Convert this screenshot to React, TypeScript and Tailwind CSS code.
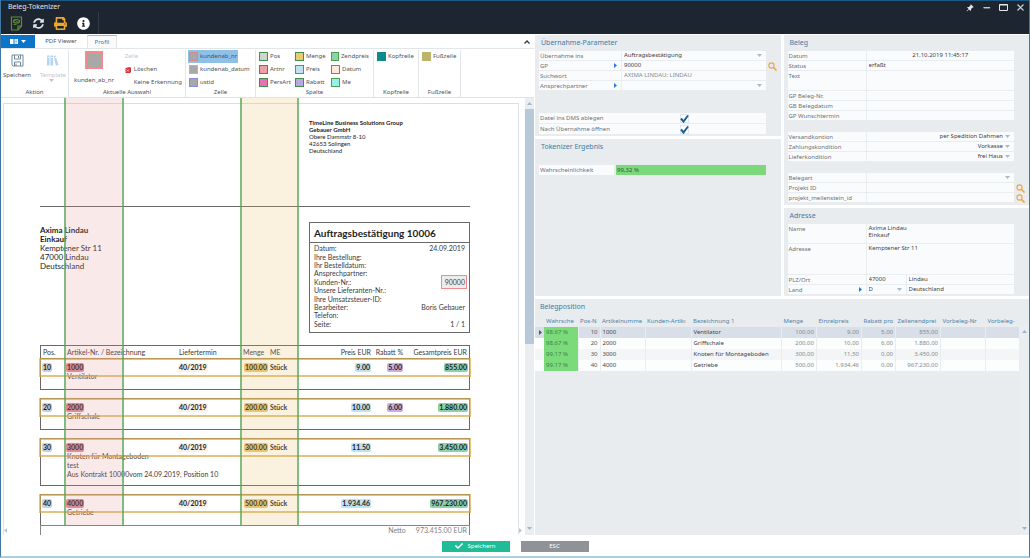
import { ReactNode, useId, useState } from "react"
import { BsPinAngleFill } from "react-icons/bs"
import { FaCheck, FaInfoCircle, FaPrint, FaSyncAlt } from "react-icons/fa"
import { VscChromeClose, VscChromeMaximize, VscChromeMinimize } from "react-icons/vsc"

type IconProps = { className?: string }

const Caret = ({ className = "" }: IconProps) => (
    <svg className={`h-[3px] w-[5px] fill-current ${className}`} viewBox="0 0 10 6"><path d="M0 0h10L5 6z" /></svg>
)

const PlayMark = ({ className = "" }: IconProps) => (
    <svg className={`h-[5px] w-[3px] shrink-0 fill-current ${className}`} viewBox="0 0 6 10"><path d="M0 0l6 5-6 5z" /></svg>
)

const SearchIcon = () => (
    <svg className="h-[9px] w-[9px] fill-none stroke-[#f0a445]" viewBox="0 0 18 18" strokeLinecap="round">
        <circle cx="7" cy="7" r="5.200" strokeWidth="2.200" />
        <path d="M11.500 11.500l4.500 4.500" strokeWidth="3.400" />
    </svg>
)

const NoteIcon = () => (
    <svg className="h-[15px] w-[13px] fill-none stroke-[#5f8f2c]" viewBox="0 0 26 30" strokeWidth="2.4">
        <path d="M3 2h20v18l-7 8H3z" />
        <path d="M23 20h-7v8" />
        <ellipse cx="13" cy="10.500" rx="6" ry="3.500" />
        <path d="M8 7l10 7M7 17h6" strokeWidth="1.800" />
    </svg>
)

const SaveIcon = () => (
    <svg className="h-[13px] w-[13px] fill-none stroke-[#6f8a9c]" viewBox="0 0 26 26" strokeWidth="2">
        <path d="M2 2h22v22H4l-2-2z" />
        <path d="M7 2v8h12V2M7 24v-8h12v8" />
        <path d="M15 4v4M10 19v5" />
    </svg>
)

const BooksIcon = () => (
    <svg className="h-[13px] w-[13px] fill-[#b5d3f5]" viewBox="0 0 26 26">
        <path d="M2 3h5v20H2zM9 3h5v20H9zM15 4l4-1 6 19-5 1z" />
        <path d="M3 6h3v2H3zM10 6h3v2h-3zM16.500 7l3-1 .5 2-3 1z" className="fill-white" />
    </svg>
)

const DeleteIcon = () => (
    <svg className="h-[6px] w-[6px]" viewBox="0 0 12 12">
        <path d="M1 2l9-2 2 2v8l-2 2H1z" className="fill-[#d9303c]" />
        <path d="M3.500 5l4 4m0-4l-4 4" className="stroke-white" strokeWidth="1.400" />
    </svg>
)

const Header = () => (
    <header className="flex h-[34px] shrink-0 justify-between border-t border-[#1d5784] bg-[#1d2530] text-[#e4e7ea]">
        <div>
            <h1 className="h-[11px] pl-[7px] text-[7px] leading-[12px]">Beleg-Tokenizer</h1>
            <div className="flex h-[22px] items-center gap-[10px] border-r border-[#313a45] pr-2 pl-[9px]">
                <button aria-label="Beleg"><NoteIcon /></button>
                <button aria-label="Aktualisieren"><FaSyncAlt className="size-[11px]" /></button>
                <button aria-label="Drucken"><FaPrint className="size-[13px] text-[#eea52b]" /></button>
                <button aria-label="Info"><FaInfoCircle className="size-[13px] text-white" /></button>
            </div>
        </div>
        <div className="flex h-[13px] items-center gap-[8px] pr-1">
            <button aria-label="Anheften"><BsPinAngleFill className="size-[8px]" /></button>
            <button aria-label="Minimieren"><VscChromeMinimize className="size-[9px] stroke-1" /></button>
            <button aria-label="Maximieren">
                <svg className="h-[7px] w-[9px] fill-none stroke-current" viewBox="0 0 9 7"><path d="M.5 1h8M.5 .5h8v6h-8z" /></svg>
            </button>
            <button aria-label="Schließen"><VscChromeClose className="size-[9px] stroke-1" /></button>
        </div>
    </header>
)

/* ---------- Ribbon ---------- */

const cells = [
    { name: "kundenab_nr", color: "border-[#d9848c] bg-[#a8a8a8]" },
    { name: "kundenab_datum", color: "border-[#8fce9a] bg-[#a8a8a8]" },
    { name: "ustid", color: "border-[#8a8ae0] bg-[#a8a8a8]" },
]

const columns = [
    { name: "Pos", color: "border-[#3f8f46] bg-[#d0d4d0]" },
    { name: "Artnr", color: "border-[#3f8f46] bg-[#e9a3a3]" },
    { name: "PersArt", color: "border-[#3f8f46] bg-[#e573b4]" },
    { name: "Menge", color: "border-[#3f8f46] bg-[#ecc878]" },
    { name: "Preis", color: "border-[#45a34c] bg-[#bfe3ee]" },
    { name: "Rabatt", color: "border-[#3f8f46] bg-[#b9a6e4]" },
    { name: "Zendpreis", color: "border-[#45a34c] bg-[#8fd0ad]" },
    { name: "Datum", color: "border-[#45a34c] bg-[#fbeadb]" },
    { name: "Me", color: "border-[#45a34c] bg-[#97f0ec]" },
]

type TokenProps = { name: string, color: string, active?: boolean, onClick?: () => void }

const Token = ({ name, color, active, onClick }: TokenProps) => (
    <button onClick={onClick} className={`flex h-[13px] items-center gap-[2px] px-px whitespace-nowrap ${active ? "bg-[#8fc0e8]" : ""}`}>
        <span className={`size-[9px] border ${color}`} />
        {name}
    </button>
)

const RibbonGroup = ({ title, className, children }: { title: string, className: string, children: ReactNode }) => (
    <section className={`flex shrink-0 flex-col border-r border-[#e3e6e9] ${className}`}>
        <div className="h-[38px]">{children}</div>
        <h2 className="text-center leading-[8px]">{title}</h2>
    </section>
)

const Ribbon = () => {
    const [selected, setSelected] = useState<string>("kundenab_nr")

    return (
        <div className="shrink-0 bg-white text-[6px] text-[#4c5258]">
            <nav className="flex h-[14px] items-stretch border-b border-[#e3e6e9]">
                <button aria-label="Menü" className="flex w-[34px] items-center justify-center gap-[3px] bg-[#0d74c8] text-white">
                    <svg className="h-[5px] w-[8px] fill-white" viewBox="0 0 16 10"><path d="M0 0h7v10H0zM9 0h7v10H9z" /><path d="M10.500 2h4M10.500 5h4M10.500 8h4" stroke="#0d74c8" /></svg>
                    <Caret className="h-[2px] w-[4px]" />
                </button>
                <button className="w-[52px]">PDF Viewer</button>
                <button className="w-[30px] border-x border-t border-x-[#e3e6e9] border-t-[#c9a3d4] bg-[#fbfbfc] text-[#1c7cb8]">Profil</button>
                <button aria-label="Menüband einklappen" className="ml-auto pr-1">
                    <svg className="h-[4px] w-[6px] fill-none stroke-[#30363c]" viewBox="0 0 12 8" strokeWidth="2.500"><path d="M1 7l5-5 5 5" /></svg>
                </button>
            </nav>
            <div className="flex h-[49px] border-b border-[#dfe2e6] pt-px">
                <RibbonGroup title="Aktion" className="w-[68px]">
                    <div className="flex justify-between px-[2px] pt-1">
                        <button className="flex flex-col items-center gap-1 leading-[8px]"><SaveIcon />Speichern</button>
                        <button className="flex flex-col items-center gap-1 leading-[8px] text-[#bfc4c9]"><BooksIcon />Template</button>
                    </div>
                    <Caret className="ml-[48px] h-[2px] w-[3px] text-[#bfc4c9]" />
                </RibbonGroup>
                <RibbonGroup title="Aktuelle Auswahl" className="w-[117px]">
                    <div className="flex justify-between pr-[3px] pl-1">
                        <div className="flex w-[42px] flex-col items-center gap-[7px] pt-px leading-[8px]">
                            <span className="size-[18px] border-2 border-[#f58a8a] bg-[#a8a8a8]" />
                            kunden_ab_nr
                        </div>
                        <div className="flex flex-col leading-[13px]">
                            <span className="text-[#bfc4c9]">Zelle</span>
                            <button className="flex items-center gap-[3px]"><DeleteIcon />Löschen</button>
                            <button className="pl-[9px]">Keine Erkennung</button>
                        </div>
                    </div>
                </RibbonGroup>
                <RibbonGroup title="Zelle" className="w-[70px]">
                    <div className="flex flex-col items-start pl-[2px]">
                        {cells.map((cell) => (
                            <Token key={cell.name} {...cell} active={cell.name === selected} onClick={() => setSelected(cell.name)} />
                        ))}
                    </div>
                </RibbonGroup>
                <RibbonGroup title="Spalte" className="w-[118px]">
                    <div className="grid grid-flow-col grid-cols-[36px_36px_40px] grid-rows-3 pl-[2px]">
                        {columns.map((column) => <Token key={column.name} {...column} />)}
                    </div>
                </RibbonGroup>
                <RibbonGroup title="Kopfzeile" className="w-[45px]">
                    <div className="pl-[2px]"><Token name="Kopfzeile" color="border-[#0e8a8c] bg-[#0e8a8c]" /></div>
                </RibbonGroup>
                <RibbonGroup title="Fußzeile" className="w-[42px]">
                    <div className="pl-[2px]"><Token name="Fußzeile" color="border-[#bdb36a] bg-[#bdb36a]" /></div>
                </RibbonGroup>
            </div>
        </div>
    )
}

/* ---------- Document ---------- */

const orderInfo = [
    ["Datum:", "24.09.2019"],
    ["Ihre Bestellung:", ""],
    ["Ihr Bestelldatum:", ""],
    ["Ansprechpartner:", ""],
    ["Kunden-Nr.:", "90000"],
    ["Unsere Lieferanten-Nr.:", ""],
    ["Ihre Umsatzsteuer-ID:", ""],
    ["Bearbeiter:", "Boris Gebauer"],
    ["Telefon:", ""],
    ["Seite:", "1 / 1"],
]

const orderLines = [
    { pos: "10", nr: "1000", text: ["Ventilator"], menge: "100.00", preis: "9.00", rabatt: "5.00", gesamt: "855.00" },
    { pos: "20", nr: "2000", text: ["Griffschale"], menge: "200.00", preis: "10.00", rabatt: "6.00", gesamt: "1.880.00" },
    { pos: "30", nr: "3000", text: ["Knoten für Montageboden", "test", "Aus Kontrakt 10000vom 24.09.2019, Position 10"], menge: "300.00", preis: "11.50", rabatt: "", gesamt: "3.450.00" },
    { pos: "40", nr: "4000", text: ["Getriebe"], menge: "500.00", preis: "1.934.46", rabatt: "", gesamt: "967.230.00" },
]

const lineGrid = "grid grid-cols-[24px_112px_62px_29px_1fr_60px_32px_66px]"

const Mark = ({ color, children }: { color: string, children: ReactNode }) => (
    <span className={`inline-block rounded-xs px-px ${color}`}>{children}</span>
)

const OrderTable = () => (
    <table className="mt-[12px] block text-[7px] leading-[9px] whitespace-nowrap text-[#3a3a3c]">
        <thead className="block border-x border-t border-[#6b6865]">
            <tr className={`${lineGrid} h-[12px] items-center text-left [&>th]:font-normal`}>
                <th className="pl-[2px]">Pos.</th>
                <th className="pl-[2px]">Artikel-Nr. / Bezeichnung</th>
                <th className="pl-[2px]">Liefertermin</th>
                <th className="pl-1">Menge</th>
                <th className="pl-[2px]">ME</th>
                <th className="text-right">Preis EUR</th>
                <th className="text-right">Rabatt %</th>
                <th className="pr-[2px] text-right">Gesamtpreis EUR</th>
            </tr>
        </thead>
        {orderLines.map((line) => (
            <tbody key={line.pos} className="relative mb-2 block border border-[#6b6865] last-of-type:mb-0">
                <tr className={`${lineGrid} pt-1 font-bold text-[#1d1d1f]`}>
                    <td className="pl-px"><Mark color="bg-[#cdd0d2]">{line.pos}</Mark></td>
                    <td className="pl-px"><Mark color="bg-[#e08a90]">{line.nr}</Mark></td>
                    <td className="pl-px"><Mark color="bg-[#fbf1e4]">40/2019</Mark></td>
                    <td className="text-right"><Mark color="bg-[#ebc875]">{line.menge}</Mark></td>
                    <td className="pl-[2px]">Stück</td>
                    <td className="text-right"><Mark color="bg-[#bfe3f3]">{line.preis}</Mark></td>
                    <td className="text-right">{line.rabatt && <Mark color="bg-[#c4aee6]">{line.rabatt}</Mark>}</td>
                    <td className="pr-px text-right"><Mark color="bg-[#8fd0a8]">{line.gesamt}</Mark></td>
                </tr>
                <tr className="block">
                    <td colSpan={8} className="block min-h-[17px] pb-[6px] pl-[26px]">
                        {line.text.map((text) => <p key={text}>{text}</p>)}
                    </td>
                </tr>
                <tr className="pointer-events-none absolute -inset-x-[2px] -top-px block h-[19px] border-2 border-[#d9a94a]/70" aria-hidden="true" />
            </tbody>
        ))}
        <tfoot className="block border-x border-[#6b6865]">
            <tr className="flex h-[16px] justify-end gap-[10px] pr-[2px] text-[#5a5f64]">
                <td>Netto</td>
                <td>973.415.00 EUR</td>
            </tr>
        </tfoot>
    </table>
)

const ScrollBar = ({ thumb }: { thumb?: string }) => (
    <div className="flex w-[9px] shrink-0 flex-col items-center bg-[#eaeef1] text-[#9fb6c8]">
        <div className="flex h-[11px] items-center"><Caret className="rotate-180" /></div>
        {thumb && <div className={`w-full bg-[#b7c8d8] ${thumb}`} />}
        <div className="mt-auto flex h-[14px] items-center"><Caret /></div>
    </div>
)

const PdfPage = () => (
    <div className="flex min-h-0 flex-1 bg-white">
        <div className="relative flex min-w-0 flex-1 flex-col overflow-hidden pt-[5px] pr-[6px] pl-[2px]">
            <article className="min-h-0 flex-1 overflow-hidden border-x border-t border-[#dcdfe2] pr-[48px] pl-[36px] font-[Lato,sans-serif] text-[#1d1d1f]">
                <address className="ml-auto h-[88px] w-[161px] pt-[15px] text-[6px] leading-[7px] not-italic">
                    <p className="font-bold">TimeLine Business Solutions Group</p>
                    <p className="font-bold">Gebauer GmbH</p>
                    <p>Obere Dammstr 8-10</p>
                    <p>42653 Solingen</p>
                    <p>Deutschland</p>
                </address>
                <div className="mt-[14px] flex justify-between border-t border-[#6b6865] pt-[15px]">
                    <address className="pt-1 text-[8px] leading-[9px] not-italic">
                        <p className="font-bold">Axima Lindau</p>
                        <p className="font-bold">Einkauf</p>
                        <p>Kemptener Str 11</p>
                        <p>47000 Lindau</p>
                        <p>Deutschland</p>
                    </address>
                    <section className="w-[161px] border border-[#6b6865]">
                        <h2 className="h-[20px] border-b border-[#6b6865] pl-1 text-[10px] leading-[20px] font-bold">Auftragsbestätigung 10006</h2>
                        <dl className="grid h-[89px] auto-rows-fr px-1 pt-px pb-1 text-[7px] leading-[8px] text-[#3a3a3c]">
                            {orderInfo.map(([label, value]) => (
                                <div key={label} className="flex items-center justify-between">
                                    <dt>{label}</dt>
                                    <dd className="relative">
                                        {value}
                                        {label === "Kunden-Nr.:" && <span className="absolute -top-[3px] -right-[2px] h-[14px] w-[26px] border border-[#ef8b8b] bg-[#8c7c7c]/15" />}
                                    </dd>
                                </div>
                            ))}
                        </dl>
                    </section>
                </div>
                <OrderTable />
            </article>

            {/* recognised column ranges */}
            <div className="absolute top-0 bottom-[10px] left-[63px] w-[60px] border-x-2 border-[#4fa655]/70 bg-[#e88f8f]/20" />
            <div className="absolute top-0 bottom-[10px] left-[239px] w-[59px] border-x-2 border-[#4fa655]/70 bg-[#e8b960]/20" />

            <div className="absolute inset-x-0 bottom-0 flex h-[10px] items-center justify-between bg-white/20 px-[3px] text-[#b4c6d4]">
                <PlayMark className="rotate-180" />
                <PlayMark />
            </div>
        </div>
        <ScrollBar thumb="h-[235px]" />
    </div>
)

/* ---------- Forms ---------- */

const Panel = ({ title, className = "", children }: { title: string, className?: string, children: ReactNode }) => (
    <section className={`bg-[#e8ecef] pl-1 ${className}`}>
        <h2 className="h-[16px] pl-[2px] text-[7px] leading-[15px] text-[#3f7ba5]">{title}</h2>
        {children}
    </section>
)

type FieldProps = {
    label: string
    value?: string
    type?: "text" | "select" | "area"
    size?: string
    labelWidth?: string
    align?: string
    link?: boolean
    search?: boolean
    muted?: boolean
    extra?: string
}

const Field = ({ label, value = "", type = "text", size = "h-[10px]", labelWidth = "w-[79px]", align = "", link, search, muted, extra }: FieldProps) => {
    const id = useId()
    const control = `min-w-0 appearance-none bg-transparent px-[2px] outline-none ${muted ? "text-[#858b91]" : "text-[#3c4248]"} ${align}`
    const width = extra ? "w-[39px]" : "flex-1"

    return (
        <div className={`flex ${size}`}>
            <div className="flex min-w-0 flex-1 border-b border-[#e9edf0] bg-[#fafbfc]">
                <label htmlFor={id} className={`flex shrink-0 justify-between border-r border-[#e9edf0] pr-1 pl-px leading-[10px] text-[#6c7278] ${labelWidth}`}>
                    {label}
                    {link && <PlayMark className="mt-[2px] text-[#2478e8]" />}
                </label>
                {type === "area" && <textarea id={id} defaultValue={value} className={`flex-1 resize-none overflow-hidden pt-px leading-[7px] ${control}`} />}
                {type === "text" && <input id={id} defaultValue={value} className={`${width} ${control}`} />}
                {type === "select" && (
                    <div className={`flex min-w-0 items-center pr-1 ${width}`}>
                        <select id={id} defaultValue={value} className={`h-full flex-1 ${control}`}>
                            <option>{value}</option>
                        </select>
                        <Caret className="h-[2px] w-[4px] shrink-0 text-[#a6bccb]" />
                    </div>
                )}
                {extra && <input aria-label={`${label} Bezeichnung`} defaultValue={extra} className={`flex-1 border-l border-[#e9edf0] ${control}`} />}
            </div>
            <div className="flex w-[15px] shrink-0 items-center pl-[2px]">
                {search && <button aria-label={`${label} suchen`}><SearchIcon /></button>}
            </div>
        </div>
    )
}

const CheckField = ({ label }: { label: string }) => {
    const id = useId()
    return (
        <div className="mr-[15px] flex h-[11px] items-center border-b border-[#e9edf0] bg-[#fafbfc]">
            <label htmlFor={id} className="w-[141px] pl-px leading-[10px] text-[#6c7278]">{label}</label>
            <span className="relative flex">
                <input id={id} type="checkbox" defaultChecked className="peer size-[9px] appearance-none border border-[#e1e6ea] bg-white" />
                <svg className="pointer-events-none absolute inset-0 hidden size-[9px] fill-none stroke-[#1b5f94] peer-checked:block" viewBox="0 0 18 18" strokeWidth="4"><path d="M2 9l5 6L16 3" /></svg>
            </span>
        </div>
    )
}

const Forms = () => (
    <div className="grid shrink-0 grid-cols-2 gap-[3px]">
        <div className="flex min-w-0 flex-col gap-[3px]">
            <Panel title="Übernahme-Parameter" className="h-[101px]">
                <Field label="Übernahme ins" value="Auftragsbestätigung" type="select" labelWidth="w-[83px]" />
                <Field label="GP" value="90000" link search labelWidth="w-[83px]" />
                <Field label="Suchwort" value="AXIMA LINDAU; LINDAU" muted labelWidth="w-[83px]" />
                <Field label="Ansprechpartner" type="select" link labelWidth="w-[83px]" />
                <div className="mt-[22px]">
                    <CheckField label="Datei ins DMS ablegen" />
                    <CheckField label="Nach Übernahme öffnen" />
                </div>
            </Panel>
            <Panel title="Tokenizer Ergebnis" className="flex-1">
                <div className="mt-[10px] mr-[15px] flex h-[10px] gap-[2px] leading-[10px]">
                    <div className="w-[75px] bg-[#fafbfc] pl-px text-[#6c7278]">Wahrscheinlichkeit</div>
                    <div className="flex-1 bg-[#7bd97b] pl-px text-[#35573d]">99,32 %</div>
                </div>
            </Panel>
        </div>
        <div className="flex min-w-0 flex-col gap-[3px]">
            <Panel title="Beleg" className="pb-[2px]">
                <Field label="Datum" value="21.10.2019 11:45:17" align="text-center" />
                <Field label="Status" value="erfaßt" />
                <Field label="Text" type="area" size="h-[20px]" />
                <Field label="GP Beleg-Nr." />
                <Field label="GB Belegdatum" />
                <Field label="GP Wunschtermin" />
                <div className="my-[11px]">
                    <Field label="Versandkontion" value="per Spedition Dahmen" type="select" align="[text-align-last:right]" />
                    <Field label="Zahlungskondition" value="Vorkasse" type="select" align="[text-align-last:right]" />
                    <Field label="Lieferkondition" value="frei Haus" type="select" align="[text-align-last:right]" />
                </div>
                <Field label="Belegart" type="select" />
                <Field label="Projekt ID" search />
                <Field label="projekt_meilenstein_id" search />
            </Panel>
            <Panel title="Adresse" className="pb-px">
                <Field label="Name" value={"Axima Lindau\nEinkauf"} type="area" size="h-[20px]" />
                <Field label="Adresse" value="Kemptener Str 11" type="area" size="h-[31px]" />
                <Field label="PLZ/Ort" value="47000" extra="Lindau" />
                <Field label="Land" value="D" type="select" link extra="Deutschland" />
            </Panel>
        </div>
    </div>
)

/* ---------- Positions ---------- */

const positions = [
    ["98.67 %", "10", "1000", "", "Ventilator", "100,00", "9,00", "5,00", "855,00", "", ""],
    ["98.67 %", "20", "2000", "", "Griffschale", "200,00", "10,00", "6,00", "1.880,00", "", ""],
    ["99.17 %", "30", "3000", "", "Knoten für Montageboden", "300,00", "11,50", "0,00", "3.450,00", "", ""],
    ["99.17 %", "40", "4000", "", "Getriebe", "500,00", "1.934,46", "0,00", "967.230,00", "", ""],
]

const positionHeads = ["Wahrsche", "Pos-N", "Artikelnumme", "Kunden-Artikı", "Bezeichnung 1", "Menge", "Einzelpreis", "Rabatt pro", "Zeilenendprei", "Vorbeleg-Nr", "Vorbeleg-"]

const cellStyle = (index: number) => {
    if (index === 0) return "bg-[#7bdb7b] text-[#3f8249]"
    if (index === 1) return "text-right text-[#50565c]"
    if (index >= 5) return "text-right text-[#858b91]"
    return "text-[#3c4248]"
}

const Positions = () => (
    <section className="flex min-h-0 flex-1 bg-[#e8ecef]">
        <div className="min-w-0 flex-1">
            <h2 className="h-[16px] pl-[5px] text-[7px] leading-[15px] text-[#3f7ba5]">Belegposition</h2>
            <table className="w-full table-fixed whitespace-nowrap">
                <colgroup>
                    <col className="w-[9px]" />
                    <col className="w-[34px]" />
                    <col className="w-[22px]" />
                    <col className="w-[45px]" />
                    <col className="w-[46px]" />
                    <col />
                    <col className="w-[35px]" />
                    <col className="w-[45px]" />
                    <col className="w-[34px]" />
                    <col className="w-[45px]" />
                    <col className="w-[45px]" />
                    <col className="w-[34px]" />
                </colgroup>
                <thead>
                    <tr className="h-[12px] text-left text-[#4f83a8]">
                        <td />
                        {positionHeads.map((head) => <th key={head} className="overflow-hidden pl-[2px] font-normal">{head}</th>)}
                    </tr>
                </thead>
                <tbody>
                    {positions.map((row, index) => (
                        <tr key={row[1]} className={`h-[11px] leading-[11px] ${index === 0 ? "bg-[#d9dfe8]" : index === 2 ? "bg-[#f4f5f7]" : "bg-[#fcfdfd]"}`}>
                            <td className="pl-1">{index === 0 && <PlayMark className="text-[#50565c]" />}</td>
                            {row.map((value, i) => (
                                <td key={i} className={`border-r border-[#e9edf0] px-[2px] ${cellStyle(i)}`}>{value}</td>
                            ))}
                        </tr>
                    ))}
                </tbody>
            </table>
        </div>
        <div className="flex pt-[27px]"><ScrollBar /></div>
    </section>
)

const App = () => (
    <div className="flex h-screen flex-col overflow-hidden border-x border-b-2 border-x-[#3f79a3] border-b-[#a9cfe2] bg-white font-['Noto_Sans',sans-serif] text-[6px]">
        <Header />
        <main className="grid min-h-0 flex-1 grid-cols-[533fr_494fr] gap-px pt-px">
            <div className="flex min-h-0 min-w-0 flex-col">
                <Ribbon />
                <PdfPage />
            </div>
            <div className="flex min-h-0 min-w-0 flex-col gap-[3px]">
                <Forms />
                <Positions />
            </div>
        </main>
        <footer className="flex h-[21px] shrink-0 items-center justify-center gap-[11px] pt-px text-[6px] text-white">
            <button className="flex h-[11px] w-[68px] items-center justify-center gap-1 bg-[#20bc97]"><FaCheck className="size-[8px]" />Speichern</button>
            <button className="h-[11px] w-[68px] bg-[#8f9398] leading-[11px]">ESC</button>
        </footer>
    </div>
)

export default App
